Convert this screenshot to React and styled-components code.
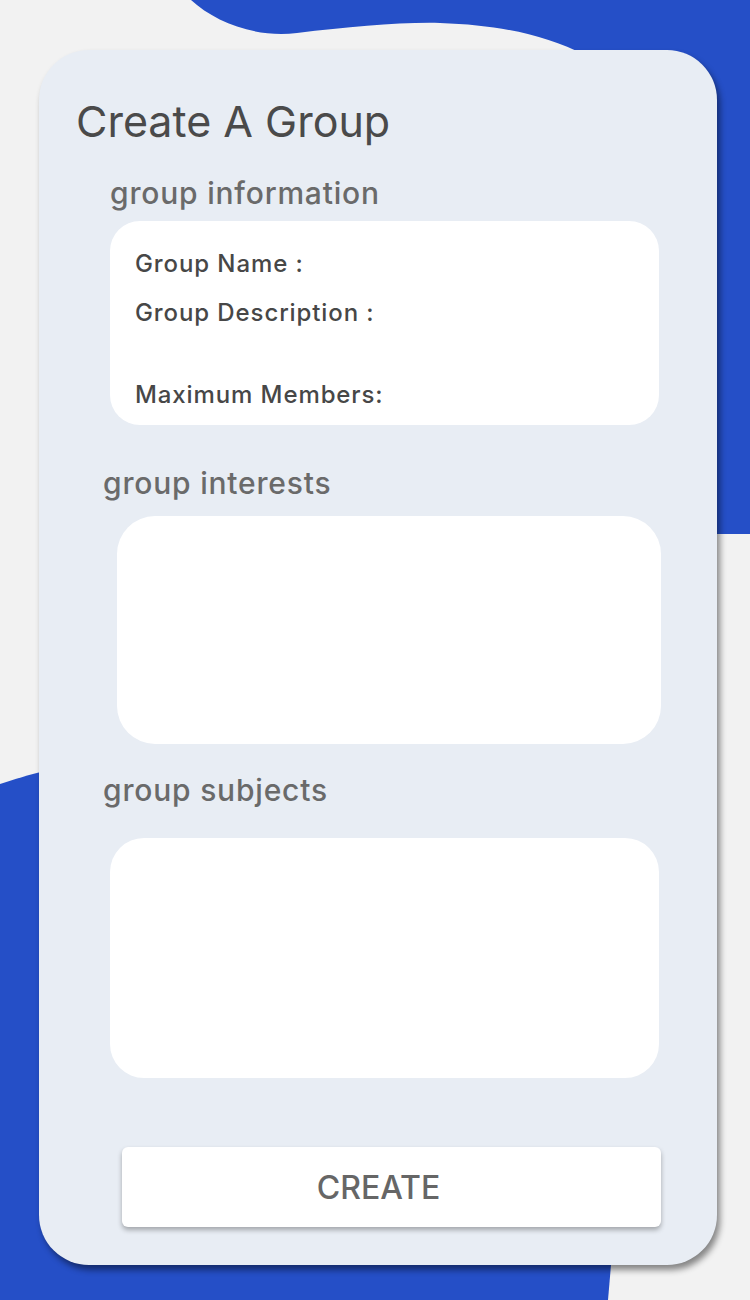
import React from "react";
import styled, { createGlobalStyle } from "styled-components";

const GlobalStyle = createGlobalStyle`
  body {
    margin: 0;
    background: #f2f2f2;
    font-family: Inter, Roboto, "Liberation Sans", sans-serif;
  }
`;

const Page = styled.div`
  position: relative;
  width: 750px;
  height: 1300px;
  overflow: hidden;
  box-sizing: border-box;
  padding: 50px 0 0 39px;
`;

const Backdrop = styled.svg`
  position: absolute;
  top: 0;
  left: 0;
  width: 750px;
  height: 1300px;
`;

const Card = styled.div`
  position: relative;
  width: 678px;
  height: 1215px;
  box-sizing: border-box;
  padding: 50px 0 0 37px;
  background: #e8edf4;
  border-radius: 50px;
  box-shadow: 3px 5px 6px rgba(0, 0, 0, 0.45);
  display: flex;
  flex-direction: column;
  align-items: flex-start;
`;

const Title = styled.h1`
  margin: 0;
  font-size: 43px;
  line-height: 1;
  font-weight: 400;
  color: #4a4a4a;
`;

const SectionTitle = styled.h2`
  margin: ${(p) => p.$top}px 0 0 ${(p) => p.$left}px;
  font-size: 30px;
  line-height: 1;
  font-weight: 500;
  letter-spacing: 0.8px;
  color: #6a6a6a;
`;

const Panel = styled.div`
  margin: ${(p) => p.$top}px 0 0 ${(p) => p.$left}px;
  width: ${(p) => p.$width}px;
  height: ${(p) => p.$height}px;
  box-sizing: border-box;
  border-radius: ${(p) => p.$radius}px;
  background: #ffffff;
`;

const InfoList = styled(Panel)`
  padding: 31px 25px 0;
  display: flex;
  flex-direction: column;
`;

const Field = styled.div`
  margin-bottom: ${(p) => p.$gap || 0}px;
  font-size: 24px;
  line-height: 1;
  font-weight: 500;
  letter-spacing: 0.9px;
  color: #474747;
`;

const CreateButton = styled.button`
  margin: 69px 0 0 46px;
  width: 539px;
  height: 80px;
  padding: 0 26px 0 0;
  border: none;
  border-radius: 6px;
  background: #ffffff;
  box-shadow: 0 3px 5px rgba(0, 0, 0, 0.3);
  font-family: inherit;
  font-size: 32px;
  font-weight: 500;
  color: #666666;
  cursor: pointer;
`;

const App = () => {
  return (
    <Page>
      <GlobalStyle />
      <Backdrop viewBox="0 0 750 1300">
        <path
          d="M191,0 C215,22 255,38 297,33 C350,27 400,22 440,23 C500,25 545,35 585,55 L700,534 L750,534 L750,0 Z"
          fill="#254fc7"
        />
        <path
          d="M0,784 C15,779 28,775 45,771 L620,1150 L611,1265 L608,1300 L0,1300 Z"
          fill="#254fc7"
        />
      </Backdrop>
      <Card>
        <Title>Create A Group</Title>

        <SectionTitle $top={35} $left={34}>
          group information
        </SectionTitle>
        <InfoList $top={13} $left={34} $width={549} $height={204} $radius={30}>
          <Field $gap={25}>Group Name :</Field>
          <Field $gap={58}>Group Description :</Field>
          <Field>Maximum Members:</Field>
        </InfoList>

        <SectionTitle $top={43} $left={27}>
          group interests
        </SectionTitle>
        <Panel $top={18} $left={41} $width={544} $height={228} $radius={38} />

        <SectionTitle $top={31} $left={27}>
          group subjects
        </SectionTitle>
        <Panel $top={33} $left={34} $width={549} $height={240} $radius={34} />

        <CreateButton>CREATE</CreateButton>
      </Card>
    </Page>
  );
};

export default App;
